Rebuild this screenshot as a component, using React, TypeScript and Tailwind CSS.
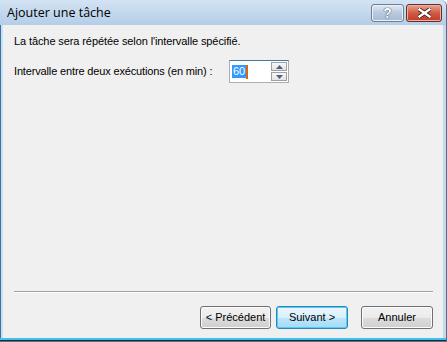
import React from 'react';

// Windows 7 basic-style wizard dialog: "Ajouter une tâche"

const DialogButton: React.FC<{ label: string; isDefault?: boolean; className?: string }> = ({
  label,
  isDefault = false,
  className = '',
}) => {
  const frame = isDefault
    ? 'border-[#3c7fb1] shadow-[inset_0_0_0_1px_#48d2fb]'
    : 'border-[#707070] shadow-[inset_0_0_0_1px_#fbfbfb]';
  return (
    <button
      className={`h-[23px] rounded-[3px] border text-[11px] text-black ${frame} ${className}`}
      style={{
        background: isDefault
          ? 'linear-gradient(#eaf6fd 0%, #d9f0fc 50%, #bee6fd 50%, #a7d9f5 100%)'
          : 'linear-gradient(#f2f2f2 0%, #ebebeb 50%, #dddddd 50%, #cfcfcf 100%)',
      }}
    >
      {label}
    </button>
  );
};

const HelpIcon = () => (
  <span className="text-[14px] font-bold leading-none text-white [text-shadow:0_0_1px_#2c3e55,0_0_1px_#2c3e55]">
    ?
  </span>
);

const CloseIcon = () => (
  <svg width="13" height="10" viewBox="0 0 13 10">
    <path
      d="M1.5 1.5 L11.5 8.5 M11.5 1.5 L1.5 8.5"
      stroke="#3b1a14"
      strokeWidth="4"
      strokeLinecap="square"
    />
    <path
      d="M1.5 1.5 L11.5 8.5 M11.5 1.5 L1.5 8.5"
      stroke="#ffffff"
      strokeWidth="2.4"
      strokeLinecap="square"
    />
  </svg>
);

const SpinArrow: React.FC<{ up?: boolean }> = ({ up = false }) => (
  <svg width="7" height="4" viewBox="0 0 7 4">
    {up ? <path d="M0 4 L3.5 0 L7 4 Z" fill="#4d6185" /> : <path d="M0 0 L3.5 4 L7 0 Z" fill="#4d6185" />}
  </svg>
);

export default function App() {
  return (
    <div
      className="flex h-[342px] w-[447px] flex-col overflow-hidden rounded-tr-[6px] border-r border-b border-[#5a6f86] bg-[#b9d1ea] font-['Liberation_Sans',Arial,sans-serif]"
    >
      {/* Title bar */}
      <div className="flex h-[25px] shrink-0 items-center justify-between bg-gradient-to-b from-[#d3e3f3] to-[#b4cde7] pr-[4px] pl-[7px]">
        <span className="pt-[1px] font-['Open_Sans',sans-serif] text-[12.5px] text-black">Ajouter une tâche</span>
        <div className="mt-[1px] flex items-center gap-[2px]">
          <div className="flex h-[18px] w-[33px] items-center justify-center rounded-[3px] border border-[#6d7f97] bg-gradient-to-b from-[#e1eaf4] via-[#b8c9dd] to-[#a6bbd4] shadow-[inset_0_0_0_1px_#e9f0f7]">
            <HelpIcon />
          </div>
          <div className="flex h-[18px] w-[36px] items-center justify-center rounded-[3px] border border-[#6b2a22] bg-gradient-to-b from-[#e8a493] via-[#cf5a44] to-[#c13a26] shadow-[inset_0_0_0_1px_#eab0a2]">
            <CloseIcon />
          </div>
        </div>
      </div>

      {/* Client area with side frames */}
      <div className="flex flex-1">
        <div className="w-[3px] border-l border-[#3d6e9e] bg-[#c6e4f5]" />
        <div className="flex flex-1 flex-col bg-[#f0f0f0] text-[11px] text-black">
          <p className="mt-[10px] ml-[11px] leading-[13px] tracking-[-0.1px]">La tâche sera répétée selon l'intervalle spécifié.</p>

          <div className="mt-[12px] ml-[11px] flex items-center">
            <span className="w-[215px] leading-[13px] tracking-[-0.15px]">Intervalle entre deux exécutions (en min) :</span>
            <div className="flex h-[23px] w-[60px] items-center border border-[#abadb3] border-t-[#3d7bad] bg-white">
              <div className="flex flex-1 items-center pl-[2px]">
                <span className="bg-[#3399ff] px-[1px] leading-[13px] text-white">60</span>
                <span className="h-[14px] w-[2px] bg-[#d06a14]" />
              </div>
              <div className="mr-[1px] flex flex-col gap-[1px]">
                <div className="flex h-[9px] w-[16px] items-center justify-center border border-[#a0a0a0] bg-gradient-to-b from-[#f7f7f7] to-[#e3e3e3]">
                  <SpinArrow up />
                </div>
                <div className="flex h-[9px] w-[16px] items-center justify-center border border-[#a0a0a0] bg-gradient-to-b from-[#f7f7f7] to-[#e3e3e3]">
                  <SpinArrow />
                </div>
              </div>
            </div>
          </div>

          <div className="flex-1" />

          <div className="mr-[10px] ml-[11px] h-[2px] border-t border-[#a0a0a0] border-b border-b-white" />

          <div className="mt-[13px] mb-[9px] mr-[10px] flex justify-end">
            <DialogButton label="< Précédent" className="w-[71px]" />
            <DialogButton label="Suivant >" isDefault className="ml-[5px] w-[72px]" />
            <DialogButton label="Annuler" className="ml-[13px] w-[72px]" />
          </div>
        </div>
        <div className="w-[3px] bg-[#c3d9ee]" />
      </div>

      {/* Bottom frame */}
      <div className="h-[3px] shrink-0 border-t-2 border-[#3ec3ef] bg-[#1b2a3a]" />
    </div>
  );
}
